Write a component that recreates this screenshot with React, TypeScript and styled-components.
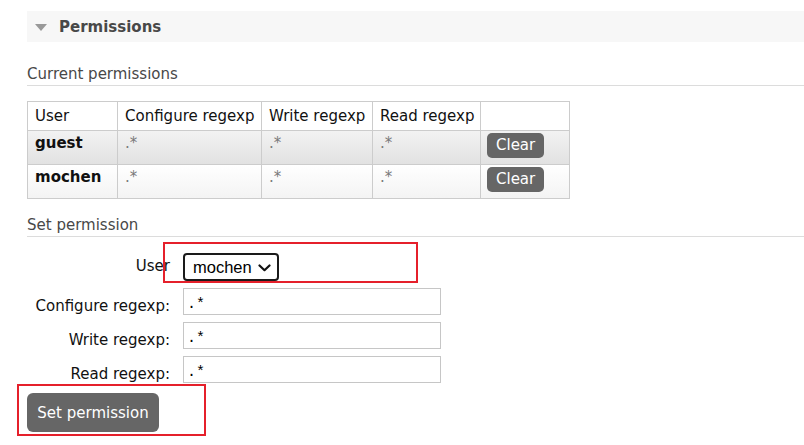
import React from "react";
import styled, { createGlobalStyle } from "styled-components";

const GlobalStyle = createGlobalStyle`
  html, body { margin: 0; padding: 0; background: #fff; }
  body {
    font-family: "DejaVu Sans", Verdana, sans-serif;
    font-size: 15px;
    color: #222;
    overflow: hidden;
  }
`;

const Page = styled.div`
  position: relative;
  padding: 11px 0 0 27px;
  width: 804px;
  min-height: 445px;
  box-sizing: border-box;
`;

const SectionHeader = styled.div`
  height: 31px;
  background: #f7f7f7;
  display: flex;
  align-items: center;
  padding-left: 8px;
  gap: 12px;
`;

const Triangle = styled.span`
  width: 0;
  height: 0;
  border-left: 6px solid transparent;
  border-right: 6px solid transparent;
  border-top: 7px solid #999;
  margin-top: 1px;
`;

const Title = styled.h2`
  margin: 0;
  font-size: 15px;
  font-weight: bold;
  color: #484848;
  line-height: 18px;
`;

const SubHeading = styled.h3<{ $mt: number }>`
  margin: ${(p) => p.$mt}px 0 0;
  font-size: 15px;
  font-weight: normal;
  color: #484848;
  line-height: 17px;
  padding-bottom: 2px;
  border-bottom: 1px solid #dcdcdc;
`;

const ListTable = styled.table`
  margin-top: 15px;
  border-collapse: collapse;
  table-layout: fixed;
  width: 542px;
  font-size: 15px;
`;

const HeadCell = styled.th`
  border: 1px solid #ccc;
  text-align: left;
  font-weight: normal;
  color: #111;
  padding: 6px 6px 5px 7px;
  line-height: 17px;
  white-space: nowrap;
`;

const Row = styled.tr<{ $alt: boolean }>`
  background: ${(p) =>
    p.$alt
      ? "linear-gradient(#f2f2f2, #e1e1e1)"
      : "linear-gradient(#ffffff, #f3f3f3)"};
`;

const Cell = styled.td`
  border: 1px solid #ccc;
  padding: 4px 6px 5px 7px;
  vertical-align: top;
  line-height: 17px;
`;

const UserCell = styled(Cell)`
  font-weight: bold;
  color: #111;
`;

const ActionCell = styled(Cell)`
  padding-top: 2px;
  padding-bottom: 6px;
`;

const Regex = styled.span`
  color: #7a7a7a;
`;

const ClearButton = styled.button`
  font-family: "DejaVu Sans", Verdana, sans-serif;
  font-size: 15px;
  color: #fff;
  background: #666;
  border: none;
  border-radius: 5px;
  height: 25px;
  padding: 0 9px;
  margin-left: -1px;
  line-height: 25px;
  display: block;
`;

const FormGrid = styled.div`
  margin-top: 16px;
  display: grid;
  grid-template-columns: 143px 258px;
  column-gap: 13px;
  row-gap: 7px;
  grid-auto-rows: 27px;
  grid-template-rows: 28px;
`;

const Label = styled.label<{ $pt: number }>`
  text-align: right;
  color: #111;
  font-size: 15px;
  line-height: 18px;
  padding-top: ${(p) => p.$pt}px;
  white-space: nowrap;
`;

const SelectBox = styled.div`
  width: 96px;
  height: 28px;
  box-sizing: border-box;
  border: 2px solid #1a1a1a;
  border-radius: 4px;
  display: flex;
  align-items: center;
  padding: 1px 6px 0 8px;
  justify-content: space-between;
  font-family: "Liberation Sans", Arial, sans-serif;
  font-size: 16.5px;
  color: #000;
`;

const TextInput = styled.input`
  width: 258px;
  height: 27px;
  box-sizing: border-box;
  border: 1px solid #c6c6c6;
  padding: 6px 3px 0;
  font-family: "Liberation Mono", "Courier New", monospace;
  font-size: 15px;
  color: #000;
  outline: none;
`;

const PrimaryButton = styled.button`
  display: block;
  margin-top: 10px;
  width: 132px;
  height: 39px;
  background: #666;
  color: #fff;
  border: none;
  border-radius: 6px;
  font-family: "DejaVu Sans", Verdana, sans-serif;
  font-size: 15px;
  padding: 0;
`;

const Annotation = styled.div<{ $x: number; $y: number; $w: number; $h: number }>`
  position: absolute;
  left: ${(p) => p.$x}px;
  top: ${(p) => p.$y}px;
  width: ${(p) => p.$w}px;
  height: ${(p) => p.$h}px;
  box-sizing: border-box;
  border: 2px solid #e5202b;
  pointer-events: none;
`;

const Chevron = () => (
  <svg width="13" height="8" viewBox="0 0 13 8" fill="none">
    <path d="M1.5 1.5 L6.5 6.2 L11.5 1.5" stroke="#111" strokeWidth="2.2" strokeLinecap="round" strokeLinejoin="round" />
  </svg>
);

const rows = [
  { user: "guest", alt: true },
  { user: "mochen", alt: false },
];

export default function App() {
  return (
    <>
      <GlobalStyle />
      <Page>
        <SectionHeader>
          <Triangle />
          <Title>Permissions</Title>
        </SectionHeader>

        <SubHeading $mt={24}>Current permissions</SubHeading>

        <ListTable>
          <colgroup>
            <col style={{ width: 90 }} />
            <col style={{ width: 144 }} />
            <col style={{ width: 111 }} />
            <col style={{ width: 108 }} />
            <col style={{ width: 89 }} />
          </colgroup>
          <thead>
            <tr>
              <HeadCell>User</HeadCell>
              <HeadCell>Configure regexp</HeadCell>
              <HeadCell>Write regexp</HeadCell>
              <HeadCell>Read regexp</HeadCell>
              <HeadCell />
            </tr>
          </thead>
          <tbody>
            {rows.map((r) => (
              <Row key={r.user} $alt={r.alt}>
                <UserCell>{r.user}</UserCell>
                <Cell><Regex>.*</Regex></Cell>
                <Cell><Regex>.*</Regex></Cell>
                <Cell><Regex>.*</Regex></Cell>
                <ActionCell><ClearButton>Clear</ClearButton></ActionCell>
              </Row>
            ))}
          </tbody>
        </ListTable>

        <SubHeading $mt={18}>Set permission</SubHeading>

        <FormGrid>
          <Label $pt={4}>User</Label>
          <SelectBox>
            <span>mochen</span>
            <Chevron />
          </SelectBox>
          <Label $pt={9}>Configure regexp:</Label>
          <TextInput defaultValue=".*" />
          <Label $pt={9}>Write regexp:</Label>
          <TextInput defaultValue=".*" />
          <Label $pt={9}>Read regexp:</Label>
          <TextInput defaultValue=".*" />
        </FormGrid>

        <PrimaryButton>Set permission</PrimaryButton>

        <Annotation $x={163} $y={242} $w={255} $h={41} />
        <Annotation $x={17} $y={384} $w={189} $h={52} />
      </Page>
    </>
  );
}
